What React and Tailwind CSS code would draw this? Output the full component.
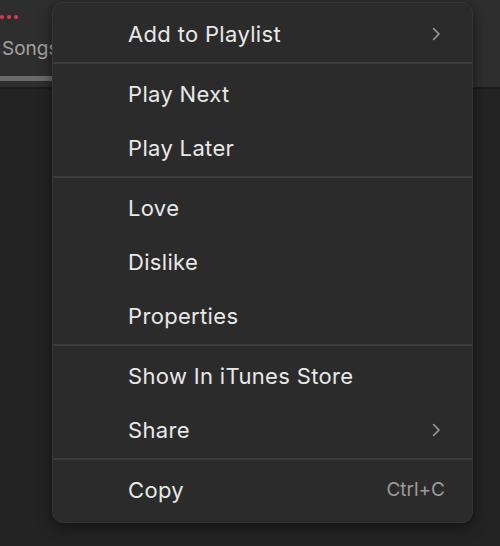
import React from 'react';

const Chevron = () => (
  <svg width="10" height="14" viewBox="0 0 10 14" fill="none">
    <polyline points="2.5,1.5 8,7 2.5,12.5" stroke="#9c9c9c" strokeWidth="1.6" strokeLinecap="round" strokeLinejoin="round" />
  </svg>
);

const sections = [
  [{ label: 'Add to Playlist', sub: true }],
  [{ label: 'Play Next' }, { label: 'Play Later' }],
  [{ label: 'Love' }, { label: 'Dislike' }, { label: 'Properties' }],
  [{ label: 'Show In iTunes Store' }, { label: 'Share', sub: true }],
  [{ label: 'Copy', shortcut: 'Ctrl+C' }],
];

const MenuItem = ({ item }) => (
  <div className="h-[54px] flex items-center pl-[75px] pr-[27px] text-[22px] tracking-[0.015em] text-[#e8e8e8]">
    <span className="flex-1">{item.label}</span>
    {item.sub && <span className="pr-[4px] flex"><Chevron /></span>}
    {item.shortcut && <span className="text-[19px] tracking-normal text-[#9b9b9b]">{item.shortcut}</span>}
  </div>
);

export default function App() {
  return (
    <div
      className="relative w-[500px] h-[546px] overflow-hidden bg-[#232323]"
      style={{ fontFamily: 'Inter, "Noto Sans", sans-serif' }}
    >
      <div className="h-[89px] bg-[#2e2e2e] border-b-2 border-[#1c1c1c] flex flex-col">
        <div className="flex gap-[3px] pt-[15px] h-[24px]">
          <span className="w-[4px] h-[4px] rounded-full bg-[#e8344f]" />
          <span className="w-[4px] h-[4px] rounded-full bg-[#e8344f]" />
          <span className="w-[4px] h-[4px] rounded-full bg-[#e8344f]" />
        </div>
        <div className="pl-[2px] pt-[15px] text-[19px] text-[#a3a3a3] leading-none">Songs</div>
        <div className="mt-[18px] w-[60px] h-[5px] bg-[#6a6a6a]" />
      </div>

      <div className="absolute left-[52px] top-[2px] w-[421px] rounded-[11px] bg-[#2b2b2b] border border-[#353535] shadow-[0_4px_14px_rgba(0,0,0,0.5)] pt-[4px] pb-[5px]">
        {sections.map((sec, i) => (
          <div key={i}>
            {i > 0 && <div className="mt-[1px] mb-[3px] h-[2px] bg-[#3b3b3b]" />}
            {sec.map((item) => (
              <MenuItem key={item.label} item={item} />
            ))}
          </div>
        ))}
      </div>
    </div>
  );
}
